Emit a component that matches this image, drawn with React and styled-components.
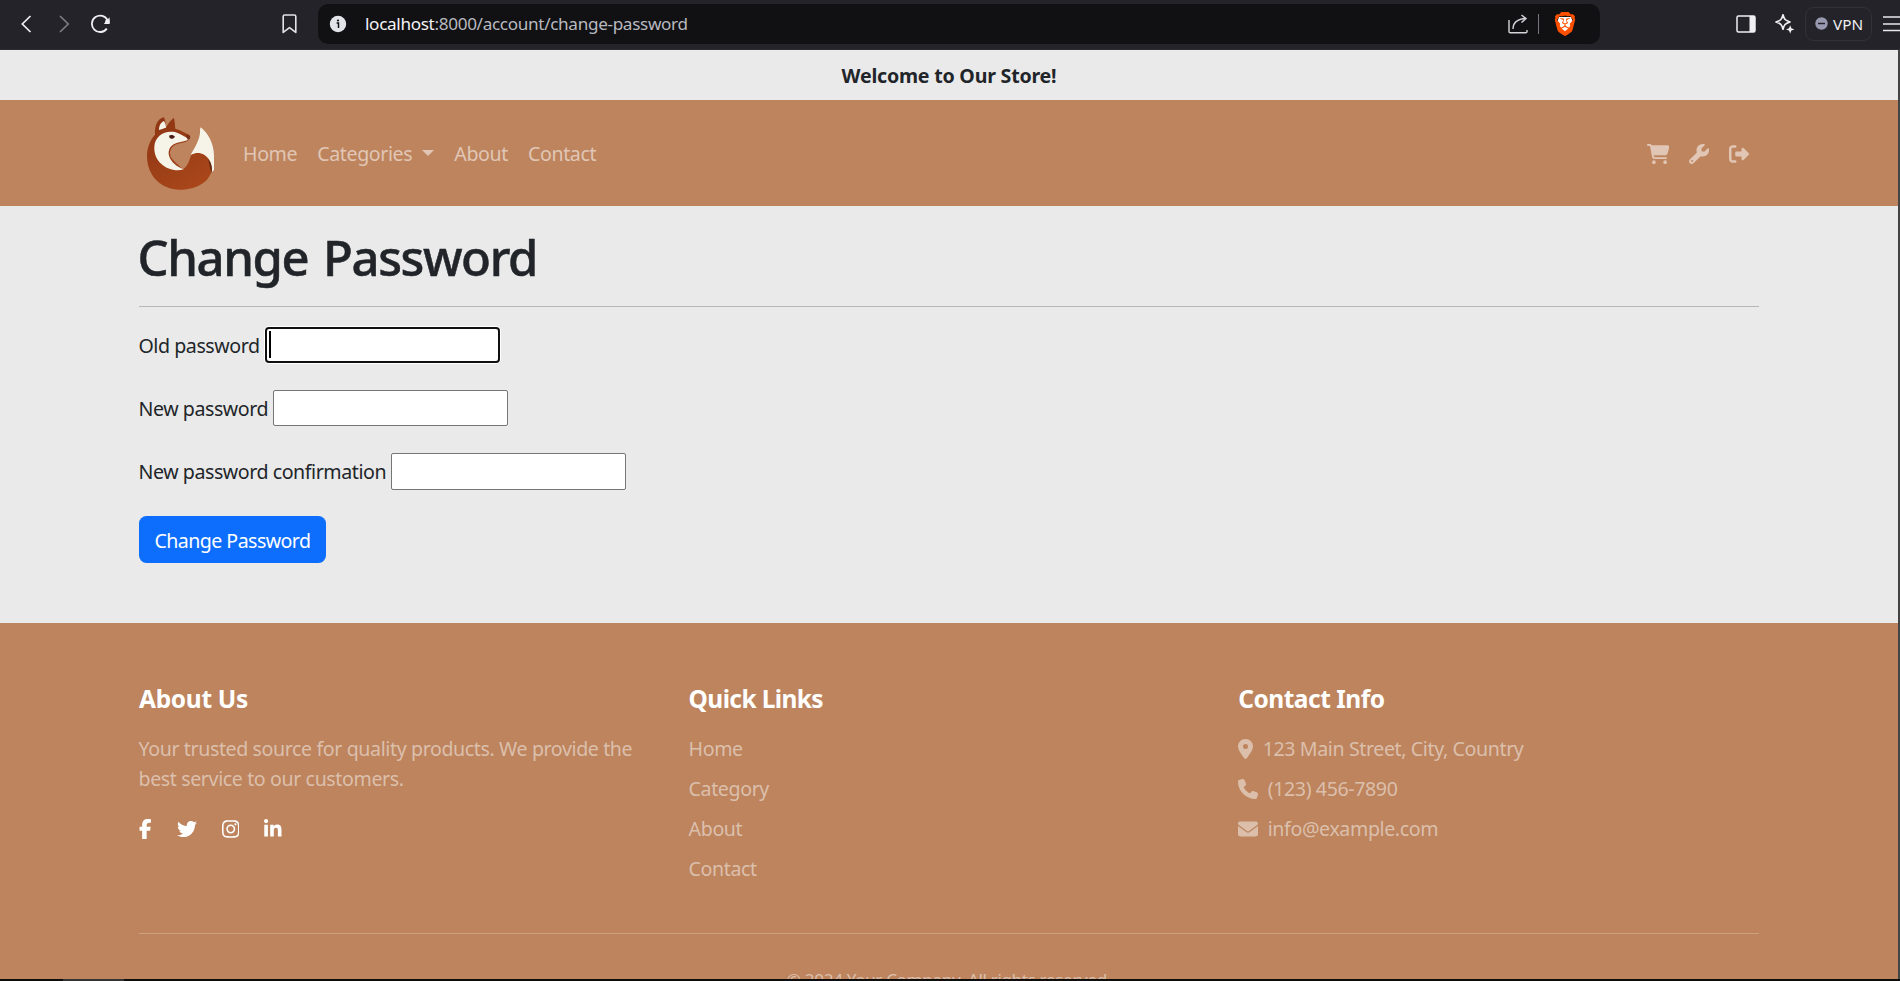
import React from "react";
import styled, { createGlobalStyle } from "styled-components";
import {
  FaCartShopping,
  FaWrench,
  FaRightFromBracket,
  FaFacebookF,
  FaTwitter,
  FaInstagram,
  FaLinkedinIn,
  FaLocationDot,
  FaPhone,
  FaEnvelope,
} from "react-icons/fa6";
import { SiBrave } from "react-icons/si";

const GlobalStyle = createGlobalStyle`
  * { box-sizing: border-box; }
  body {
    margin: 0;
    overflow: hidden;
    background: #eaeaea;
    color: #212529;
    font-family: "Noto Sans", "Open Sans", sans-serif;
    font-size: 19.6px;
    line-height: 30px;
    letter-spacing: -0.39px;
  }
  h1, h2, p, ul { margin: 0; padding: 0; }
  ul { list-style: none; }
  a { color: inherit; text-decoration: none; }
  svg { display: block; flex: none; }
`;

const Window = styled.div`
  display: flex;
  flex-direction: column;
  width: 1900px;
  height: 981px;
  overflow: hidden;
`;

/* Browser toolbar */
const Toolbar = styled.header`
  flex: none;
  display: flex;
  align-items: center;
  height: 50px;
  padding: 0 0 2px 19px;
  background: #242329;
  border-bottom: 1px solid #2f2e35;
  color: #f0f0f4;
`;

const NavButtons = styled.div`
  flex: none;
  display: flex;
  align-items: center;
  gap: 26px;
  width: 263px;
  > svg:last-child { margin-left: -7px; }
`;

const AddressBar = styled.div`
  flex: none;
  display: flex;
  align-items: center;
  width: 1282px;
  height: 40px;
  margin-left: 21px;
  padding: 0 27px 0 11px;
  border-radius: 10px;
  background: #111113;
  font-size: 17.15px;
  letter-spacing: -0.33px;
`;

const Url = styled.span`
  flex: 1;
  padding-left: 18px;
  color: #b9b9c0;
`;

const UrlHost = styled.span`
  color: #f3f3f6;
`;

const Divider = styled.span`
  width: 1px;
  height: 20px;
  margin: 0 14px 0 10px;
  background: #77777c;
`;

const BraveBadge = styled.span`
  display: grid;
  place-items: center;
  width: 20px;
  height: 24px;
  color: #ff4f00;
  > svg { grid-area: 1 / 1; }
`;

const ToolbarActions = styled.div`
  flex: none;
  display: flex;
  align-items: center;
  margin-left: 136px;
  > svg:first-child { margin-right: 18px; }
`;

const VpnPill = styled.div`
  display: flex;
  align-items: center;
  gap: 5px;
  width: 67px;
  height: 34px;
  margin: 0 11px 0 10px;
  padding-left: 9px;
  border: 1px solid #323138;
  border-radius: 9px;
  font-size: 15.3px;
  letter-spacing: 0;
`;

/* Page */
const Viewport = styled.div`
  flex: 1;
  min-height: 0;
  overflow: hidden;
  border-right: 2px solid #444;
`;

const Banner = styled.div`
  height: 50px;
  padding: 11px 0 0 0;
  text-align: center;
  font-weight: 700;
  letter-spacing: -0.22px;
`;

const Container = styled.div`
  width: 1620px;
  margin: 0 auto;
`;

const Navbar = styled.nav`
  height: 106px;
  background: #bd845e;
  color: #e1c6b5;
`;

const NavInner = styled(Container)`
  display: flex;
  align-items: center;
  height: 100%;
`;

const NavLinks = styled.div`
  display: flex;
  gap: 20px;
  margin-left: 29px;
  padding-top: 1px;
`;

const NavLink = styled.a`
  display: flex;
  align-items: center;
`;

const Caret = styled.span`
  margin: -1px 0 0 10px;
  border-top: 6px solid currentColor;
  border-left: 6px solid transparent;
  border-right: 6px solid transparent;
`;

/* Icon box, as wide as the glyph's own advance */
const Glyph = styled.span`
  flex: none;
  width: ${(p) => p.$w}px;
  height: 20px;
  > svg { width: ${(p) => p.$w}px; height: 20px; }
`;

const NavIcons = styled.div`
  display: flex;
  align-items: center;
  gap: 20px;
  margin-left: auto;
  padding-right: 10px;
  padding-top: 1px;
`;

const Main = styled.main`
  height: 417px;
  padding-top: 21px;
`;

const Title = styled.h1`
  margin-left: -1.5px;
  font-size: 49px;
  font-weight: 500;
  line-height: 60px;
  letter-spacing: -1.4px;
  word-spacing: 3.5px;
  -webkit-text-stroke: 0.5px currentColor;
`;

const Rule = styled.hr`
  height: 1px;
  margin: ${(p) => p.$gap};
  border: 0;
  background: ${(p) => p.$color};
`;

const Form = styled.form`
  display: flex;
  flex-direction: column;
  align-items: flex-start;
  gap: 26.8px;
`;

const Field = styled.label`
  display: flex;
  align-items: center;
  gap: 5px;
  height: 36.4px;
  letter-spacing: -0.44px;
`;

const FieldName = styled.span`
  margin-left: -0.5px;
  padding-top: 2px;
`;

const Input = styled.span`
  display: flex;
  width: 235px;
  height: 36.4px;
  padding: 2px;
  background: #fff;
  border: ${(p) => (p.$focused ? "2px solid #101010" : "1px solid #767676")};
  border-radius: ${(p) => (p.$focused ? "4px" : "2px")};
  box-shadow: ${(p) => (p.$focused ? "0 0 0 1px #fff" : "none")};
`;

const TextCursor = styled.span`
  width: 2px;
  height: 27px;
  background: #000;
`;

const Submit = styled.button`
  width: 187px;
  height: 47px;
  padding: 2px 0 0;
  border: 0;
  border-radius: 7.5px;
  background: #0d6efd;
  color: #fff;
  font: inherit;
  letter-spacing: -0.56px;
`;

const Footer = styled.footer`
  height: 400px;
  padding-top: 61px;
  background: #bd845e;
  color: #dcbfab;
`;

const Columns = styled.div`
  display: grid;
  grid-template-columns: 519.6px 519.6px 1fr;
  column-gap: 30px;
  height: 249px;
`;

const Heading = styled.h2`
  margin-bottom: 20.4px;
  color: #fff;
  font-size: 24.5px;
  font-weight: 700;
  letter-spacing: ${(p) => p.$track};
`;

const Blurb = styled.p`
  width: 510px;
  margin-left: -0.5px;
`;

const Socials = styled.div`
  display: flex;
  align-items: center;
  gap: 25px;
  margin-top: 25px;
  color: #fff;
`;

const List = styled.ul`
  display: flex;
  flex-direction: column;
  gap: 10px;
`;

const ListItem = styled.li`
  display: flex;
  align-items: center;
  gap: 9.5px;
  height: 30px;
`;

const Copyright = styled.p`
  text-align: center;
  font-size: 17.15px;
  line-height: 26px;
  letter-spacing: -0.37px;
`;

const Taskbar = styled.div`
  flex: none;
  height: 2px;
  padding-left: 63px;
  background: #0d0d0e;
`;

const TaskbarItem = styled.div`
  width: 61px;
  height: 2px;
  background: #343436;
`;

const BackIcon = () => (
  <svg width="13" height="20" viewBox="0 0 13 20" fill="none" stroke="#f0f0f4" strokeWidth="1.7">
    <path d="M11.5 2 3.3 10l8.2 8" />
  </svg>
);

const ForwardIcon = () => (
  <svg width="13" height="20" viewBox="0 0 13 20" fill="none" stroke="#7d7c82" strokeWidth="1.7">
    <path d="m2 2 8.2 8L2 18" />
  </svg>
);

const ReloadIcon = () => (
  <svg width="22" height="20" viewBox="0 0 22 20" fill="none" stroke="#f0f0f4" strokeWidth="1.8">
    <path d="M16.8 14.6A8.2 8.2 0 1 1 17.6 6.4" />
    <path d="M19.6 3.3v6.6h-5.8Z" fill="#f0f0f4" stroke="none" />
    <circle cx="17.4" cy="7.8" r="2.3" fill="#f0f0f4" stroke="none" />
  </svg>
);

const BookmarkIcon = () => (
  <svg width="15" height="20" viewBox="0 0 15 20" fill="none" stroke="#e4e4e8" strokeWidth="1.6" strokeLinejoin="round">
    <path d="M1.2 2.4Q1.2 1 2.6 1h9.8q1.4 0 1.4 1.4v16L7.5 13.6 1.2 18.4Z" />
  </svg>
);

const InfoIcon = () => (
  <svg width="18" height="18" viewBox="0 0 18 18">
    <circle cx="9" cy="9" r="8.2" fill="#e3e3ea" />
    <circle cx="9" cy="5.5" r="1.1" fill="#111113" />
    <path d="M7.6 8H9.5v5" fill="none" stroke="#111113" strokeWidth="1.5" />
  </svg>
);

const ShareIcon = () => (
  <svg width="20" height="20" viewBox="0 0 20 20" fill="none" stroke="#d6d6da" strokeWidth="1.4">
    <path d="M1 6v11.5q0 1.3 1.3 1.3h15.4q1.3 0 1.3-1.3V16" />
    <path d="M5 15c0-6 4-10 13-10.5M13.5 1l4.5 3.6-4.5 4" />
  </svg>
);

const PanelIcon = () => (
  <svg width="20" height="18" viewBox="0 0 20 18">
    <rect x="1" y="1" width="18" height="16" rx="1.5" fill="none" stroke="#f0f0f4" strokeWidth="1.5" />
    <path d="M13.5 1h5.5v16h-5.5z" fill="#f0f0f4" />
  </svg>
);

const SparkleIcon = () => (
  <svg width="21" height="21" viewBox="0 0 21 21">
    <path
      d="M9 1.800C10.2 6.500 11 7.300 16 9 11 10.700 10.200 11.500 9 16.200 7.800 11.500 7 10.700 2 9 7 7.300 7.800 6.500 9 1.800Z"
      fill="none"
      stroke="#f0f0f4"
      strokeWidth="1.7"
      strokeLinejoin="round"
    />
    <path d="m16.200 12.200 1.200 3 3 1.200-3 1.200-1.200 3-1.200-3-3-1.200 3-1.200z" fill="#f0f0f4" />
  </svg>
);

const VpnDot = () => (
  <svg width="13" height="13" viewBox="0 0 13 13">
    <circle cx="6.5" cy="6.5" r="6.2" fill="#9899b0" />
    <path d="M3 6.5h7" stroke="#242329" strokeWidth="1.5" />
  </svg>
);

const MenuIcon = () => (
  <svg width="20" height="18" viewBox="0 0 20 18" stroke="#e8e8ec" strokeWidth="1.5">
    <path d="M0 2h20M0 9h20M0 15.5h20" />
  </svg>
);

const BraveIcon = () => (
  <BraveBadge>
    <svg width="20" height="24" viewBox="0 0 20 24" fill="#fff">
      <path d="M4 5h12l1.5 4-2.5 8-5 4-5-4-2.500-8z" />
    </svg>
    <SiBrave size={24} />
  </BraveBadge>
);

const FoxLogo = () => (
  <svg width="75" height="75" viewBox="0 16 225 225">
    <defs>
      <linearGradient id="fur" x1="0" y1="0" x2="0.6" y2="1">
        <stop offset="0" stopColor="#8c3413" />
        <stop offset="1" stopColor="#a8461a" />
      </linearGradient>
    </defs>
    <path
      d="M48 72C46 42 58 24 74 20c5 5 6 18 6 32C86 40 94 30 105 21c2 10 3 21 4 33 16 4 30 14 43 19 3 6 1 11-2 14-12 12-34 8-46 18-11 10-13 20-9 31-8 0 37 40 37 40 15-10 18-24 24-42 22-16 49-8 63 26 3 10-2 17-3 26-10 32-50 51-93 51C65 237 24 194 24 136c0-26 10-48 24-64Z"
      fill="url(#fur)"
    />
    <path d="M60 58C60 43 67 34 75 31c3 6 6 13 6 20-8 2-14 5-21 7Z" fill="#f6f4e9" />
    <path
      d="M46 108c2-32 31-50 64-43 15 6 28 13 40 20-10 9-33 8-46 16-14 9-18 23-13 37 6 16 22 30 43 38-40 12-91-18-88-68Z"
      fill="#f6f4e9"
    />
    <path d="M90 75c6-4 14-2 18 3-4 6-10 8-16 4Z" fill="#4b1c16" />
    <path d="M141 72c6 1 11 3 13 7-1 5-4 8-8 8l-3-6Z" fill="#74301a" />
    <path
      d="M185 50c23 18 40 50 40 86v42l-6 6c-1-12-1-25-8-36-13-21-34-26-56-16 14-24 26-44 28-66 0-7 0-12 2-16Z"
      fill="#f6f4e9"
    />
    <path d="M207 145c12 14 13 28 11 43-5-14-7-29-11-43Z" fill="#642714" />
  </svg>
);

const navIcons = [
  { Icon: FaCartShopping, width: 22.5 },
  { Icon: FaWrench, width: 20 },
  { Icon: FaRightFromBracket, width: 20 },
];

const socialIcons = [
  { Icon: FaFacebookF, width: 12.5 },
  { Icon: FaTwitter, width: 20 },
  { Icon: FaInstagram, width: 17.5 },
  { Icon: FaLinkedinIn, width: 17.5 },
];

const contacts = [
  { Icon: FaLocationDot, width: 15, text: "123 Main Street, City, Country" },
  { Icon: FaPhone, width: 20, text: "(123) 456-7890" },
  { Icon: FaEnvelope, width: 20, text: "info@example.com" },
];

export default function App() {
  return (
    <Window>
      <GlobalStyle />
      <Toolbar>
        <NavButtons>
          <BackIcon />
          <ForwardIcon />
          <ReloadIcon />
        </NavButtons>
        <BookmarkIcon />
        <AddressBar>
          <InfoIcon />
          <Url>
            <UrlHost>localhost</UrlHost>:8000/account/change-password
          </Url>
          <ShareIcon />
          <Divider />
          <BraveIcon />
        </AddressBar>
        <ToolbarActions>
          <PanelIcon />
          <SparkleIcon />
          <VpnPill>
            <VpnDot />
            VPN
          </VpnPill>
          <MenuIcon />
        </ToolbarActions>
      </Toolbar>

      <Viewport>
        <Banner>Welcome to Our Store!</Banner>
        <Navbar>
          <NavInner>
            <FoxLogo />
            <NavLinks>
              <NavLink>Home</NavLink>
              <NavLink>
                Categories
                <Caret />
              </NavLink>
              <NavLink>About</NavLink>
              <NavLink>Contact</NavLink>
            </NavLinks>
            <NavIcons>
              {navIcons.map(({ Icon, width }, i) => (
                <Glyph key={i} $w={width}>
                  <Icon />
                </Glyph>
              ))}
            </NavIcons>
          </NavInner>
        </Navbar>

        <Main>
          <Container>
            <Title>Change Password</Title>
            <Rule $gap="19px 0 19.8px" $color="#b5b6b7" />
            <Form>
              <Field>
                <FieldName>Old password</FieldName>
                <Input $focused>
                  <TextCursor />
                </Input>
              </Field>
              <Field>
                <FieldName>New password</FieldName>
                <Input />
              </Field>
              <Field>
                <FieldName>New password confirmation</FieldName>
                <Input />
              </Field>
              <Submit type="button">Change Password</Submit>
            </Form>
          </Container>
        </Main>

        <Footer>
          <Container>
            <Columns>
              <section>
                <Heading $track="-0.31px">About Us</Heading>
                <Blurb>
                  Your trusted source for quality products. We provide the best service to our
                  customers.
                </Blurb>
                <Socials>
                  {socialIcons.map(({ Icon, width }, i) => (
                    <Glyph key={i} $w={width}>
                      <Icon />
                    </Glyph>
                  ))}
                </Socials>
              </section>
              <section>
                <Heading $track="-0.62px">Quick Links</Heading>
                <List>
                  {["Home", "Category", "About", "Contact"].map((link) => (
                    <ListItem key={link}>
                      <a>{link}</a>
                    </ListItem>
                  ))}
                </List>
              </section>
              <section>
                <Heading $track="-0.48px">Contact Info</Heading>
                <List>
                  {contacts.map(({ Icon, width, text }) => (
                    <ListItem key={text}>
                      <Glyph $w={width}>
                        <Icon />
                      </Glyph>
                      {text}
                    </ListItem>
                  ))}
                </List>
              </section>
            </Columns>
            <Rule $gap="0 0 33px" $color="#cea182" />
            <Copyright>© 2024 Your Company. All rights reserved.</Copyright>
          </Container>
        </Footer>
      </Viewport>
      <Taskbar>
        <TaskbarItem />
      </Taskbar>
    </Window>
  );
}
